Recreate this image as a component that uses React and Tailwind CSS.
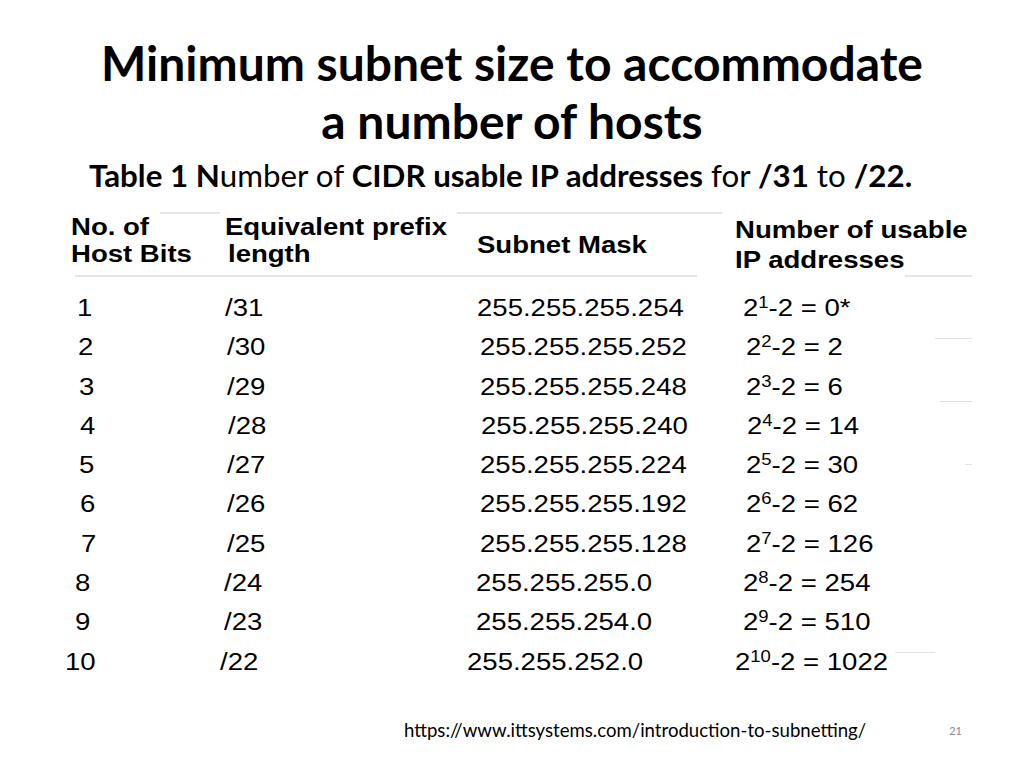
import React from "react";

const rows = [
  { h: "1", p: "/31", m: "255.255.255.254", e: "1", r: "0*", o: ["ml-[-1px]", "ml-0", "ml-0", "ml-0"] },
  { h: "2", p: "/30", m: "255.255.255.252", e: "2", r: "2", o: ["ml-0", "ml-[2px]", "ml-[3px]", "ml-[3px]"] },
  { h: "3", p: "/29", m: "255.255.255.248", e: "3", r: "6", o: ["ml-[1px]", "ml-[2px]", "ml-[3px]", "ml-[3px]"] },
  { h: "4", p: "/28", m: "255.255.255.240", e: "4", r: "14", o: ["ml-[2px]", "ml-[3px]", "ml-[4px]", "ml-[4px]"] },
  { h: "5", p: "/27", m: "255.255.255.224", e: "5", r: "30", o: ["ml-[1px]", "ml-[2px]", "ml-[3px]", "ml-[3px]"] },
  { h: "6", p: "/26", m: "255.255.255.192", e: "6", r: "62", o: ["ml-[2px]", "ml-[2px]", "ml-[3px]", "ml-[3px]"] },
  { h: "7", p: "/25", m: "255.255.255.128", e: "7", r: "126", o: ["ml-[3px]", "ml-[2px]", "ml-[3px]", "ml-[3px]"] },
  { h: "8", p: "/24", m: "255.255.255.0", e: "8", r: "254", o: ["ml-[-3px]", "ml-[-1px]", "ml-[-1px]", "ml-0"] },
  { h: "9", p: "/23", m: "255.255.254.0", e: "9", r: "510", o: ["ml-[-3px]", "ml-[-1px]", "ml-[-1px]", "ml-0"] },
  { h: "10", p: "/22", m: "255.255.252.0", e: "10", r: "1022", o: ["ml-[-13px]", "ml-[-5px]", "ml-[-10px]", "ml-[-8px]"] },
];

const S = "inline-block origin-left scale-x-[1.12] whitespace-nowrap";

export default function App() {
  return (
    <div className="w-[1024px] h-[768px] bg-white overflow-hidden text-black">
      <div
        className="pt-[34px] text-center font-bold text-[48px] leading-[58px] whitespace-nowrap"
        style={{ fontFamily: "Lato, 'Noto Sans', sans-serif" }}
      >
        <div>Minimum subnet size to accommodate</div>
        <div>a number of hosts</div>
      </div>
      <div
        className="mt-[7px] pr-[23px] text-center text-[31.3px] leading-[36px] whitespace-nowrap"
        style={{ fontFamily: "Lato, 'Noto Sans', sans-serif" }}
      >
        <span className="font-bold">Table 1 N</span>umber of <span className="font-bold">CIDR usable IP addresses</span> for{" "}
        <span className="font-bold">/31</span> to <span className="font-bold">/22.</span>
      </div>

      <div
        className="relative mt-[19px] text-[24.6px]"
        style={{ fontFamily: "'Liberation Sans', Arial, sans-serif" }}
      >
        <div className="absolute top-0 left-[160px] w-[60px] h-[2px] bg-[#e6e6e6]" />
        <div className="absolute top-0 left-[457px] w-[265px] h-[2px] bg-[#e6e6e6]" />
        <div className="absolute top-[63px] left-[75px] w-[622px] h-[2px] bg-[#e6e6e6]" />
        <div className="absolute top-[63px] left-[905px] w-[67px] h-[2px] bg-[#e6e6e6]" />
        <div className="absolute top-[126px] left-[935px] w-[37px] h-px bg-[#e2e2e2]" />
        <div className="absolute top-[189px] left-[940px] w-[32px] h-px bg-[#e2e2e2]" />
        <div className="absolute top-[252px] left-[965px] w-[7px] h-px bg-[#e2e2e2]" />
        <div className="absolute top-[440px] left-[895px] w-[40px] h-px bg-[#e2e2e2]" />

        <div className="h-[76px] pl-[78px] grid grid-cols-[147px_252px_266px_1fr] font-bold">
          <div className="pt-[1px] ml-[-7px] leading-[27px]">
            <div><span className={S}>No. of</span></div>
            <div><span className={S}>Host Bits</span></div>
          </div>
          <div className="pt-[1px] leading-[27px]">
            <div><span className={S}>Equivalent prefix</span></div>
            <div className="pl-[3px]"><span className={S}>length</span></div>
          </div>
          <div className="pt-[19px] leading-[27px]">
            <span className={S}>Subnet Mask</span>
          </div>
          <div className="pt-[2.5px] ml-[-8px] leading-[30px]">
            <div><span className={S}>Number of usable</span></div>
            <div><span className={S}>IP addresses</span></div>
          </div>
        </div>

        {rows.map((r) => (
          <div
            key={r.h}
            className="h-[39.3px] leading-[39.3px] pl-[78px] grid grid-cols-[147px_252px_266px_1fr]"
          >
            <div className={r.o[0]}><span className={S}>{r.h}</span></div>
            <div className={r.o[1]}><span className={S}>{r.p}</span></div>
            <div className={r.o[2]}><span className={S}>{r.m}</span></div>
            <div className={r.o[3]}>
              <span className={S}>
                2<span className="text-[16.5px] leading-[0px] align-[8.5px]">{r.e}</span>-2 = {r.r}
              </span>
            </div>
          </div>
        ))}
      </div>

      <div
        className="mt-[38px] flex items-center pl-[404px] pr-[62px] h-[24px]"
        style={{ fontFamily: "Lato, 'Noto Sans', sans-serif" }}
      >
        <span className="text-[18.6px]">https://www.ittsystems.com/introduction-to-subnetting/</span>
        <span className="ml-auto text-[11px] text-[#8c8c8c]">21</span>
      </div>
    </div>
  );
}
